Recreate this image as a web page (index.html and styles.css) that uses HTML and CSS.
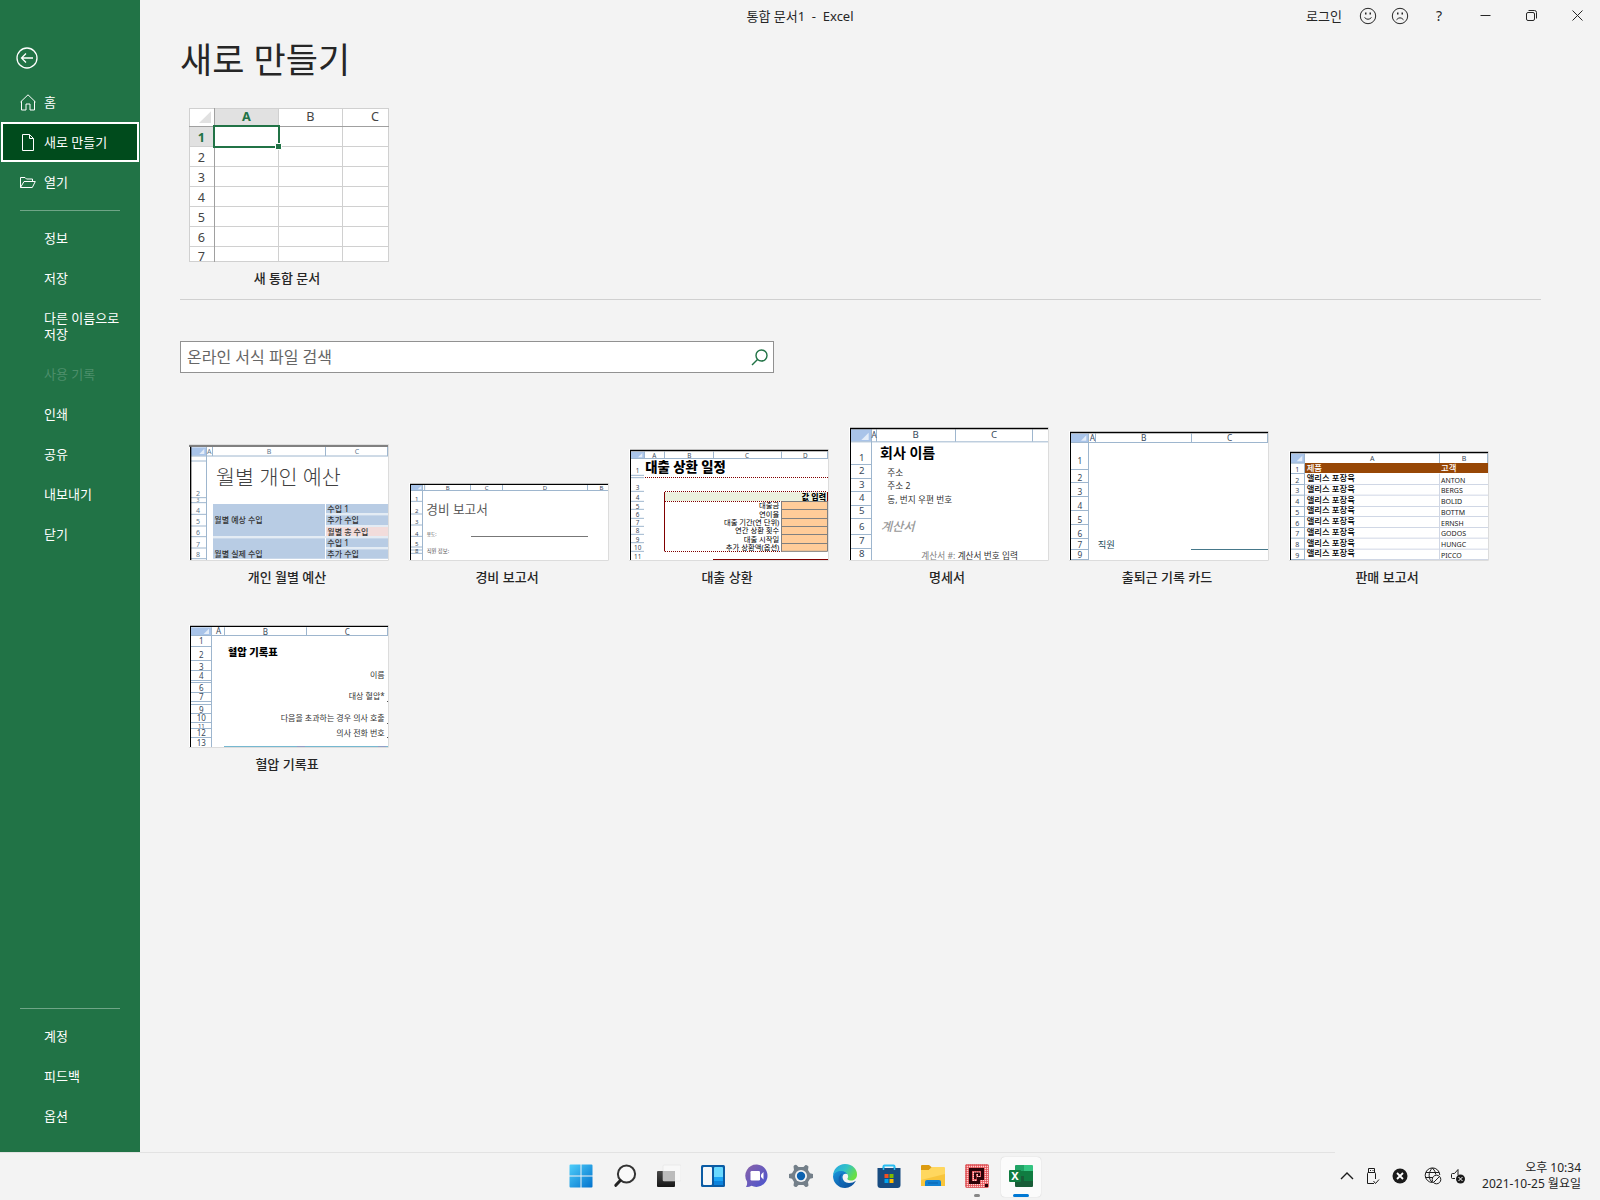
FILE: index.html
```html
<!DOCTYPE html>
<html lang="ko">
<head>
    <meta charset="UTF-8">
    <meta name="viewport" content="width=device-width, initial-scale=1.0">
    <title>통합 문서1 - Excel</title>
    <link rel="stylesheet" href="styles.css">
</head>
<body>
    <div class="window">
        <nav class="sidebar">
            <button class="back" type="button" aria-label="뒤로">
                <svg width="22" height="22" viewBox="0 0 22 22"><circle cx="11" cy="11" r="10"/><path d="M17 11H5.5M10 6.500l-4.500 4.500l4.500 4.500"/></svg>
            </button>
            <ul class="menu">
                <li><a href="#home">
                    <svg width="16" height="17" viewBox="0 0 16 17"><path d="M.5 8L8 .8L15.500 8M1.500 7.200V16H6V10H10V16H14.500V7.200"/></svg>
                    홈</a></li>
                <li><a class="active" href="#new">
                    <svg width="16" height="17" viewBox="0 0 16 17"><path d="M2.500 .5H9.500L13.500 4.500V16.500H2.500ZM9.500 .5V4.500H13.500"/></svg>
                    새로 만들기</a></li>
                <li><a href="#open">
                    <svg width="16" height="13" viewBox="0 0 16 13"><path d="M.5 11.500V1.500H5L6.500 3H12.500V5.500M.5 11.500L4 5.500H15.300L12.300 11.500Z"/></svg>
                    열기</a></li>
            </ul>
            <ul class="menu sub">
                <li><a href="#info">정보</a></li>
                <li><a href="#save">저장</a></li>
                <li><a class="two-line" href="#saveas">다른 이름으로 저장</a></li>
                <li><a class="disabled" href="#history" aria-disabled="true">사용 기록</a></li>
                <li><a href="#print">인쇄</a></li>
                <li><a href="#share">공유</a></li>
                <li><a href="#export">내보내기</a></li>
                <li><a href="#close">닫기</a></li>
            </ul>
            <ul class="menu sub bottom">
                <li><a href="#account">계정</a></li>
                <li><a href="#feedback">피드백</a></li>
                <li><a href="#options">옵션</a></li>
            </ul>
        </nav>
        <div class="content">
            <header class="titlebar">
                <span class="doc-title">통합 문서1&nbsp; -&nbsp; Excel</span>
                <div class="title-tools">
                    <a class="login" href="#login">로그인</a>
                    <button class="face" type="button" aria-label="웃는 얼굴">
                        <svg width="18" height="18" viewBox="0 0 18 18"><circle cx="9" cy="9" r="7.700"/><path d="M5.500 10.500Q9 14 12.500 10.500"/><path class="eye" d="M6 5.500h1.500v2H6zM10.500 5.500h1.500v2h-1.500z"/></svg>
                    </button>
                    <button class="face" type="button" aria-label="슬픈 얼굴">
                        <svg width="18" height="18" viewBox="0 0 18 18"><circle cx="9" cy="9" r="7.700"/><path d="M5.500 12.800Q9 8.800 12.500 12.800"/><path class="eye" d="M6 5.500h1.500v2H6zM10.500 5.500h1.500v2h-1.500z"/></svg>
                    </button>
                    <button class="caption-btn" type="button">?</button>
                    <button class="caption-btn" type="button" aria-label="최소화">
                        <svg width="11" height="11" viewBox="0 0 11 11"><path d="M.5 5.500h10"/></svg>
                    </button>
                    <button class="caption-btn" type="button" aria-label="이전 크기로">
                        <svg width="11" height="11" viewBox="0 0 11 11"><rect x=".5" y="2.500" width="8" height="8" rx="1.500"/><path d="M2.500 .5H8.500Q10.500 .5 10.500 2.500V8.500"/></svg>
                    </button>
                    <button class="caption-btn" type="button" aria-label="닫기">
                        <svg width="11" height="11" viewBox="0 0 11 11"><path d="M.5 .5l10 10M10.500 .5l-10 10"/></svg>
                    </button>
                </div>
            </header>
            <main>
                <h1>새로 만들기</h1>
                <section class="blank">
                    <a class="template" href="#blank">
                        <svg class="thumb" width="200" height="154" viewBox="0 0 600 462">
                            <rect width="600" height="462" fill="#fff"/>
                            <path fill="#e1e1e1" d="M75 0H270V54H75zM0 54H75V117H0zM66 10V45H30z"/>
                            <path class="rule" stroke="#d0d0d0" d="M1.500 0V462M0 1.500H600M0 115.500H600M0 175.500H600M0 235.500H600M0 295.500H600M0 355.500H600M0 415.500H600M0 460.500H600M268.500 0V462M460.500 0V462M598.500 0V462"/>
                            <path class="rule" stroke="#a0a0a0" d="M0 55.500H600M76.500 0V462"/>
                            <path fill="#fff" stroke="#217346" stroke-width="6" d="M75 54H270V117H75z"/>
                            <path fill="#217346" stroke="#fff" stroke-width="3" d="M259.500 106.500H277.500V124.500H259.500z"/>
                            <g font-size="38" fill="#444" text-anchor="middle">
                                <text class="green" x="172" y="38">A</text><text x="364" y="38">B</text><text x="558" y="38">C</text>
                                <text class="green" x="37" y="101">1</text><text x="37" y="162">2</text><text x="37" y="222">3</text><text x="37" y="282">4</text><text x="37" y="342">5</text><text x="37" y="402">6</text><text x="37" y="460">7</text>
                            </g>
                        </svg>
                        <span>새 통합 문서</span>
                    </a>
                </section>
                <form class="search">
                    <input type="search" aria-label="온라인 서식 파일 검색" placeholder="온라인 서식 파일 검색">
                    <button type="button" aria-label="검색 시작">
                        <svg width="17" height="17" viewBox="0 0 17 17"><circle cx="10.500" cy="6.500" r="5.500"/><path d="M6.500 10.500L1 16"/></svg>
                    </button>
                </form>
                <section class="templates">
                    <a class="template" href="#budget">
                        <svg class="thumb" width="200" height="117" viewBox="57 72 600 351">
                            <rect x="57" y="72" width="600" height="351" fill="#fff"/>
                            <path fill="#b8cce4" d="M129 252H465V348H129zM129 355H465V416H129zM468 252H654V279H468zM468 286H654V315H468zM468 355H654V381H468zM468 388H654V416H468z"/>
                            <path fill="#f2dcdb" d="M468 321H654V348H468z"/>
                            <path stroke="#dce6f1" stroke-width="5" d="M129 351H654M468 282H654M468 318H654M468 384H654"/>
                            <path fill="#a9c4e9" d="M63 82H108V107H63z"/><path fill="#e4edf8" d="M103 86V102H88z"/>
                            <path class="rule" stroke="#9eb6ce" d="M63 108H654M109.500 78V420M127.500 80V108M466.500 80V108M652.500 80V108M63 123H109M63 233H109M63 248H109M63 283H109M63 318H109M63 350H109M63 384H109M63 416H109"/>
                            <path fill="#808080" d="M57 74H657V81H57z"/><path d="M60 80H64V420H60z"/>
                            <g font-size="21" fill="#61788c" text-anchor="middle">
                                <text x="118" y="103">A</text><text x="297" y="103">B</text><text x="561" y="103">C</text>
                                <text x="84" y="228">2</text><text x="84" y="246" font-size="15">3</text><text x="84" y="278">4</text><text x="84" y="313">5</text><text x="84" y="346">6</text><text x="84" y="380">7</text><text x="84" y="412">8</text>
                            </g>
                            <text class="light" x="138" y="194" font-size="62" fill="#404040">월별 개인 예산</text>
                            <g font-size="24" font-weight="500" fill="#333">
                                <text x="133" y="310">월별 예상 수입</text><text x="133" y="410">월별 실제 수입</text>
                                <text x="472" y="275">수입 1</text><text x="472" y="310">추가 수입</text><text x="472" y="344">월별 총 수입</text><text x="472" y="377">수입 1</text><text x="472" y="410">추가 수입</text>
                            </g>
                            <path class="frame" d="M58.500 421.500H655.500V73.500"/>
                        </svg>
                        <span>개인 월별 예산</span>
                    </a>
                    <a class="template" href="#expense">
                        <svg class="thumb" width="200" height="78" viewBox="717 189 600 234">
                            <rect x="717" y="189" width="600" height="234" fill="#fff"/>
                            <path fill="#a9c4e9" d="M723 195H757V210H723z"/><path fill="#e4edf8" d="M754 197V208H743z"/>
                            <path class="rule" stroke="#9eb6ce" d="M723 211.500H1314M757.500 195V420M764 195V211M901.500 195V211M997.500 195V211M1252.500 195V211M723 244H757M723 282H757M723 315H757M723 349H757M723 381H757M723 390H757M723 400H757"/>
                            <path d="M720 191H1314V195H723V420H720z"/>
                            <g font-size="18" fill="#39495a" text-anchor="middle">
                                <text x="833" y="209">B</text><text x="950" y="209">C</text><text x="1125" y="209">D</text><text x="1294" y="209">B</text>
                                <text x="740" y="243">1</text><text x="740" y="278">2</text><text x="740" y="313">3</text><text x="740" y="347">4</text><text x="740" y="379">5</text><text x="740" y="398">8</text>
                            </g>
                            <text class="title" x="769" y="283" font-size="38" fill="#595959">경비 보고서</text>
                            <text x="770" y="347" font-size="14" fill="#555">용도:</text><text x="770" y="400" font-size="16" fill="#555">직원 정보:</text>
                            <path class="rule" stroke="#777" d="M903 349.500H1254"/>
                            <path class="frame" d="M717 421.500H1315.500V189"/>
                        </svg>
                        <span>경비 보고서</span>
                    </a>
                    <a class="template" href="#loan">
                        <svg class="thumb" width="200" height="112" viewBox="57 87 600 336">
                            <rect x="57" y="87" width="600" height="336" fill="#fff"/>
                            <path fill="#a9c4e9" d="M63 95H102V115H63z"/><path fill="#e4edf8" d="M97 99V112H84z"/>
                            <path class="rule" stroke="#9eb6ce" d="M63 115.500H654M103.500 95V117M163.500 95V115M310.500 95V115M514.500 95V115M652.500 95V115M63 166H102M63 173H102M63 214H102M63 244H102M63 268H102M63 295H102M63 319H102M63 343H102M63 368H102M63 394H102"/>
                            <path d="M60 89H654V94H63V420H60z"/>
                            <path fill="#ebf1de" d="M165 217H651V243H165z"/>
                            <path fill="#ffcc99" stroke="#808080" stroke-width="3" d="M514.500 244.500H652.500V394H514.500z"/>
                            <path class="rule" stroke="#808080" d="M514 268.500H652M514 295.500H652M514 319.500H652M514 343.500H652M514 370.500H652"/>
                            <path class="rule" stroke="#800000" stroke-dasharray="3" d="M105 172.500H654M165 214.500H651M165 244.500H514M165 394.500H514"/>
                            <path class="rule" stroke="#800000" d="M163.500 216V394M652.500 216V244M309 418.500H654"/>
                            <g font-size="19" fill="#39495a" text-anchor="middle">
                                <text x="133" y="113">A</text><text x="238" y="113">B</text><text x="411" y="113">C</text><text x="586" y="113">D</text>
                                <text x="83" y="159">1</text><text x="83" y="210">3</text><text x="83" y="240">4</text><text x="83" y="266">5</text><text x="83" y="291">6</text><text x="83" y="315">7</text><text x="83" y="340">8</text><text x="83" y="365">9</text><text x="83" y="390">10</text><text x="83" y="417">11</text>
                            </g>
                            <text x="106" y="157" font-size="40" font-weight="900">대출 상환 일정</text>
                            <g font-size="22" text-anchor="end">
                                <text x="648" y="239" font-size="24" font-weight="900">값 입력</text><text x="508" y="265">대출금</text><text x="508" y="290">연이율</text><text x="508" y="315">대출 기간(연 단위)</text><text x="508" y="340">연간 상환 횟수</text><text x="508" y="365">대출 시작일</text><text x="508" y="390">추가 상환액(옵션)</text>
                            </g>
                            <path class="frame" d="M57 421.500H655.500V87"/>
                        </svg>
                        <span>대출 상환</span>
                    </a>
                    <a class="template" href="#invoice">
                        <svg class="thumb" width="200" height="134" viewBox="717 21 600 402">
                            <rect x="717" y="21" width="600" height="402" fill="#fff"/>
                            <path fill="#a9c4e9" d="M723 28H784V64H723z"/><path fill="#e4edf8" d="M776 38V60H754z"/>
                            <path class="rule" stroke="#9eb6ce" d="M723 65.500H1314M784.500 28V420M799.500 28V65M1036.500 28V65M1267.500 28V65M723 133.500H784M723 175.500H784M723 214.500H784M723 256.500H784M723 295.500H784M723 343.500H784M723 385.500H784"/>
                            <path d="M720 23H1314V28H723V420H720z"/>
                            <g font-size="29" fill="#39495a" text-anchor="middle">
                                <text x="792" y="54" font-size="24">A</text><text x="917" y="54">B</text><text x="1152" y="54">C</text>
                                <text x="755" y="122">1</text><text x="755" y="162">2</text><text x="755" y="203">3</text><text x="755" y="244">4</text><text x="755" y="282">5</text><text x="755" y="330">6</text><text x="755" y="371">7</text><text x="755" y="412">8</text>
                            </g>
                            <text x="810" y="113" font-size="42" font-weight="700">회사 이름</text>
                            <g font-size="26" fill="#333"><text x="832" y="168">주소</text><text x="832" y="207">주소 2</text><text x="832" y="248">동, 번지 우편 번호</text></g>
                            <text x="812" y="332" font-size="37" font-style="italic" font-weight="500" fill="#999">계산서</text>
                            <text x="934" y="416" font-size="26" fill="#333"><tspan fill="#808080">계산서 #:</tspan> 계산서 번호 입력</text>
                            <path class="frame" d="M717 421.500H1315.500V21"/>
                        </svg>
                        <span>명세서</span>
                    </a>
                    <a class="template" href="#timecard">
                        <svg class="thumb" width="200" height="130" viewBox="57 33 600 390">
                            <rect x="57" y="33" width="600" height="390" fill="#fff"/>
                            <path fill="#a9c4e9" d="M63 41H115V67H63z"/><path fill="#e4edf8" d="M109 46V62H93z"/>
                            <path class="rule" stroke="#9eb6ce" d="M63 67.500H654M115.500 41V420M136.500 41V67M424.500 41V67M652.500 41V67M63 148.500H115M63 187.500H115M63 229.500H115M63 271.500H115M63 313.500H115M63 355.500H115M63 388.500H115M63 418.500H115"/>
                            <path d="M60 35H654V40H63V420H60z"/>
                            <g font-size="25" fill="#39495a" text-anchor="middle">
                                <text x="127" y="63">A</text><text x="281" y="63">B</text><text x="539" y="63">C</text>
                                <text x="90" y="133">1</text><text x="90" y="183">2</text><text x="90" y="224">3</text><text x="90" y="266">4</text><text x="90" y="309">5</text><text x="90" y="351">6</text><text x="90" y="383">7</text><text x="90" y="413">9</text>
                            </g>
                            <text x="143" y="383" font-size="28" fill="#244a5a">직원</text>
                            <path class="rule" stroke="#46788a" d="M423 388.500H654"/>
                            <path class="frame" d="M57 421.500H655.500V33"/>
                        </svg>
                        <span>출퇴근 기록 카드</span>
                    </a>
                    <a class="template" href="#sales">
                        <svg class="thumb" width="200" height="110" viewBox="717 93 600 330">
                            <rect x="717" y="93" width="600" height="330" fill="#fff"/>
                            <path fill="#a9c4e9" d="M723 101H762V129H723z"/><path fill="#e4edf8" d="M757 107V124H740z"/>
                            <path class="rule" stroke="#d0d7e5" d="M765 193.500H1314M765 225.500H1314M765 259.500H1314M765 289.500H1314M765 322.500H1314M765 354.500H1314M765 387.500H1314M765 418.500H1314M1168.500 161V420"/>
                            <path class="rule" stroke="#9eb6ce" d="M763.500 101V420M1168.500 101V130M1312.500 101V130M723 129.500H765M723 160.500H763M723 193.500H763M723 225.500H763M723 259.500H763M723 289.500H763M723 322.500H763M723 354.500H763M723 387.500H763M723 418.500H763"/>
                            <path fill="#974706" d="M765 129H1314V159H765z"/>
                            <path d="M720 95H1314V100H723V420H720z"/>
                            <g font-size="21" fill="#39495a" text-anchor="middle">
                                <text x="967" y="123">A</text><text x="1242" y="123">B</text>
                                <text x="742" y="156">1</text><text x="742" y="189">2</text><text x="742" y="219">3</text><text x="742" y="252">4</text><text x="742" y="285">5</text><text x="742" y="318">6</text><text x="742" y="348">7</text><text x="742" y="381">8</text><text x="742" y="414">9</text>
                            </g>
                            <g font-size="25" font-weight="500">
                                <text x="770" y="152" fill="#fff">제품</text><text x="1173" y="152" fill="#fff">고객</text>
                                <text x="770" y="184">앨리스 포장육</text><text x="770" y="217">앨리스 포장육</text><text x="770" y="250">앨리스 포장육</text><text x="770" y="280">앨리스 포장육</text><text x="770" y="313">앨리스 포장육</text><text x="770" y="346">앨리스 포장육</text><text x="770" y="379">앨리스 포장육</text><text x="770" y="409">앨리스 포장육</text>
                            </g>
                            <g font-size="21" fill="#222">
                                <text x="1173" y="189">ANTON</text><text x="1173" y="219">BERGS</text><text x="1173" y="252">BOLID</text><text x="1173" y="285">BOTTM</text><text x="1173" y="318">ERNSH</text><text x="1173" y="348">GODOS</text><text x="1173" y="381">HUNGC</text><text x="1173" y="414">PICCO</text>
                            </g>
                            <path class="frame" d="M717 421.500H1315.500V93"/>
                        </svg>
                        <span>판매 보고서</span>
                    </a>
                    <a class="template" href="#pressure">
                        <svg class="thumb" width="200" height="123" viewBox="57 45 600 369">
                            <rect x="57" y="45" width="600" height="369" fill="#fff"/>
                            <path fill="#a9c4e9" d="M63 52H124V76H63z"/><path fill="#e4edf8" d="M117 56V72H101z"/>
                            <path class="rule" stroke="#9eb6ce" d="M63 76.500H654M124.500 52V411M163.500 52V76M409.500 52V76M652.500 52V76M63 109.500H124M63 151.500H124M63 181.500H124M63 211.500H124M63 217.500H124M63 247.500H124M63 274.500H124M63 283.500H124M63 310.500H124M63 337.500H124M63 355.500H124M63 382.500H124"/>
                            <path d="M60 47H654V51H63V411H60z"/>
                            <g font-size="24" fill="#39495a" text-anchor="middle">
                                <text x="146" y="73">A</text><text x="286" y="74">B</text><text x="532" y="74">C</text>
                                <text x="94" y="103">1</text><text x="94" y="143">2</text><text x="94" y="179">3</text><text x="94" y="206">4</text><text x="94" y="243">6</text><text x="94" y="271">7</text><text x="94" y="308">9</text><text x="94" y="334">10</text><text x="94" y="353" font-size="18">11</text><text x="94" y="379">12</text><text x="94" y="407">13</text>
                            </g>
                            <text x="173" y="138" font-size="31" font-weight="900">혈압 기록표</text>
                            <g font-size="24" fill="#333" text-anchor="end">
                                <text x="644" y="204">이름</text><text x="644" y="267">대상 혈압*</text><text x="644" y="333">다음을 초과하는 경우 의사 호출</text><text x="644" y="377">의사 전화 번호</text>
                            </g>
                            <path class="rule" stroke="#76b8d0" d="M162 409.500H654"/><path class="rule" stroke="#8f9fc8" d="M381 409.500H405M624 409.500H648"/>
                            <path d="M651 273h3v3h-3zM651 339h3v3h-3zM651 381h3v3h-3z" fill="#555"/>
                            <path class="frame" d="M57 412.500H655.500V45"/>
                        </svg>
                        <span>혈압 기록표</span>
                    </a>
                </section>
            </main>
        </div>
    </div>
    <footer class="taskbar">
        <div class="apps">
            <button type="button" aria-label="시작">
                <svg width="24" height="24" viewBox="0 0 24 24">
                    <defs><linearGradient id="win" x1="0" y1="0" x2="24" y2="24" gradientUnits="userSpaceOnUse"><stop stop-color="#50d0fb"/><stop offset="1" stop-color="#0070cc"/></linearGradient></defs>
                    <path fill="url(#win)" d="M1.500 .5H11.500V11.500H.5V1.500Q.5 .5 1.500 .5zM12.500 .5H22.500Q23.500 .5 23.500 1.500V11.500H12.500zM.5 12.500H11.500V23.500H1.500Q.5 23.500 .5 22.500zM12.500 12.500H23.500V22.500Q23.500 23.500 22.500 23.500H12.500z"/>
                </svg>
            </button>
            <button type="button" aria-label="검색">
                <svg width="24" height="24" viewBox="0 0 24 24"><circle cx="13.500" cy="10" r="8.600" fill="#f9f9f9" stroke="#333" stroke-width="2"/><path stroke="#222" stroke-width="3" stroke-linecap="round" d="M7.300 16.500L2.800 21.300"/></svg>
            </button>
            <button type="button" aria-label="작업 보기">
                <svg width="24" height="24" viewBox="0 0 24 24">
                    <defs><linearGradient id="dark" x1="0" y1="0" x2="0" y2="1"><stop stop-color="#484848"/><stop offset="1" stop-color="#161616"/></linearGradient></defs>
                    <rect y="7" width="18" height="16" rx="1" fill="url(#dark)"/><rect x="6" y="1" width="18" height="16" rx="1" fill="#f8f8f8" stroke="#ddd" stroke-width=".5"/><path fill="#bcbcbc" d="M6 7H18V17H6z"/>
                </svg>
            </button>
            <button type="button" aria-label="위젯">
                <svg width="24" height="24" viewBox="0 0 24 24"><rect y="1" width="24" height="22" rx="1.500" fill="#0a5ba4"/><rect x="2" y="3" width="9" height="18" rx="1" fill="#f5f7f9"/><path fill="#69d9ff" d="M14 3H21Q22 3 22 4V13H13V4Q13 3 14 3z"/><path fill="#1aa4f5" d="M13 13H22V17H13z"/><path fill="#0c82dc" d="M13 17H22V21H13z"/></svg>
            </button>
            <button type="button" aria-label="채팅">
                <svg width="24" height="24" viewBox="0 0 24 24">
                    <defs><linearGradient id="chat" x1="0" y1="0" x2="1" y2="1"><stop stop-color="#8a62a8"/><stop offset="1" stop-color="#4854d0"/></linearGradient></defs>
                    <path fill="url(#chat)" d="M12 .5A11.200 11.200 0 1 1 6.500 21.800Q3.500 23.500 1 23Q2.500 21 2 17.500A11.200 11.200 0 0 1 12 .5z"/><rect x="5.500" y="7" width="9.500" height="9.500" rx="1.200" fill="#fff"/><path fill="#fff" d="M16 10.500L18.500 8V15.500L16 13z"/>
                </svg>
            </button>
            <button type="button" aria-label="설정">
                <svg width="24" height="24" viewBox="0 0 24 24"><path fill="#737f89" d="M5 1.500Q6.500 .5 7.500 1L9.500 3H14.500L16.500 1Q18 .5 19.500 2.500L19 6L21 9.300L24 10V14L21 14.700L19 18L19.500 21.500Q18 23.500 16.500 23L14.500 21H9.500L7.500 23Q6 23.500 4.500 21.500L5 18L3 14.700L0 14V10L3 9.300L5 6L4.500 2.500z"/><circle cx="12" cy="12" r="6" fill="#f3f3f3"/><circle cx="12" cy="12" r="4.200" fill="#0c62b0"/></svg>
            </button>
            <button type="button" aria-label="Edge">
                <svg width="24" height="24" viewBox="0 0 24 24">
                    <defs><linearGradient id="edge" x1="0" y1="0" x2="1" y2=".5"><stop stop-color="#25a4e6"/><stop offset=".55" stop-color="#33c3c5"/><stop offset="1" stop-color="#68df45"/></linearGradient><linearGradient id="edge2" x1="0" y1="0" x2=".8" y2="1"><stop stop-color="#1898e0"/><stop offset="1" stop-color="#0b4c98"/></linearGradient></defs>
                    <path fill="url(#edge2)" d="M0 12Q1 6 7 6Q12 6 14.500 10Q10 8.500 9.500 13Q9.500 18.500 16 19Q20 19 23 16.800Q19 24 12 24A12 12 0 0 1 0 12z"/>
                    <path fill="url(#edge)" d="M0 12A12 12 0 0 1 12 0C20 0 24 5.500 24 10.500C24 15 20.500 16.800 17.500 16.500C15 16.300 14 15.300 14.500 14.300C16.500 12.500 14 7.200 8.500 7C4 7 1 9 0 12z"/>
                    <path fill="#1162b2" d="M8 12Q6.500 20 13.500 23.800Q8 22.500 6 18Q4.500 12 9.500 9Z"/>
                </svg>
            </button>
            <button type="button" aria-label="Microsoft Store">
                <svg width="24" height="24" viewBox="0 0 24 24"><path fill="none" stroke="#28bdf2" stroke-width="2" d="M6.500 7V2.500Q6.500 1.500 7.500 1.500H16.500Q17.500 1.500 17.500 2.500V7"/><path fill="#174b80" d="M.5 4H23.500V21Q23.500 24 20.500 24H3.500Q.5 24 .5 21z"/><path fill="none" stroke="#28bdf2" stroke-width="1.500" d="M6.500 6V3M17.500 6V3"/><path fill="#f25022" d="M7.500 10H11.500V14H7.500z"/><path fill="#7fba00" d="M12.500 10H16.500V14H12.500z"/><path fill="#00a4ef" d="M7.500 15H11.500V19H7.500z"/><path fill="#ffb900" d="M12.500 15H16.500V19H12.500z"/></svg>
            </button>
            <button type="button" aria-label="파일 탐색기">
                <svg width="24" height="24" viewBox="0 0 24 24"><path fill="#dc9b10" d="M0 2Q0 1 1 1H8L11 3.500L8 6H0z"/><path fill="#ffd75e" d="M0 6H8L11 3H23Q24 3 24 4V22H0z"/><path fill="#f8c53c" d="M0 16L24 10V22H0z"/><path fill="#1180d2" d="M4 22V18Q4 16 6 16H18Q20 16 20 18V22z"/><path fill="#0b61ac" d="M7 18.500H17V19.500H7z"/></svg>
            </button>
            <button class="running" type="button" aria-label="캡처 도구">
                <svg width="24" height="24" viewBox="0 0 24 24">
                    <defs><pattern id="dots" width="2" height="2" patternUnits="userSpaceOnUse"><rect width="2" height="2" fill="#e0474c"/><rect width="1.300" height="1.300" fill="#ffd0d0"/></pattern></defs>
                    <rect x=".5" y=".5" width="23" height="23" rx="1" fill="url(#dots)" stroke="#d5393e" stroke-width=".6"/><path fill="#2b0308" fill-rule="evenodd" d="M4 4H19V16H15V20H4zM7 7V17H12V13H16V7z"/><path fill="#2b0308" fill-rule="evenodd" d="M9 8.500H15V12H11.500V15H9zM11 10V12H13V10z"/><path fill="#2b0308" d="M20 20h3v3h-3z"/>
                </svg>
            </button>
            <button class="running current" type="button" aria-label="Excel">
                <svg width="24" height="24" viewBox="0 0 24 24"><path fill="#21a366" d="M6 2Q6 1 7 1H15V12H6z"/><path fill="#33c481" d="M15 1H23Q24 1 24 2V7H15z"/><path fill="#107c41" d="M15 7H24V12H15zM6 7H15V12H6z"/><path fill="#185c37" d="M6 12H15V17H24V22Q24 23 23 23H7Q6 23 6 22z"/><path fill="#107c41" d="M15 12H24V17H15z"/><rect y="6" width="12" height="12" rx="1" fill="#107c41"/><text x="6" y="16" font-size="11" font-weight="700" fill="#fff" text-anchor="middle">X</text></svg>
            </button>
        </div>
        <div class="tray">
            <button type="button" aria-label="숨겨진 아이콘 표시"><svg width="14" height="16" viewBox="0 0 14 16"><path d="M1 11L7 5L13 11" stroke-width="1.400"/></svg></button>
            <button type="button" aria-label="USB"><svg width="14" height="18" viewBox="0 0 14 18"><path d="M2.500 6V1.500H8.500V6M1.500 16.500V6.500Q1.500 5.500 2.500 5.500H8.500Q9.500 5.500 9.500 6.500V12M1.500 16.500H8M4 3.500h1M6.500 3.500h1M7.500 14L9.500 16.500L13 12.500"/></svg></button>
            <button type="button" aria-label="오류"><svg width="16" height="16" viewBox="0 0 16 16"><circle cx="8" cy="8" r="7.500" fill="#1b1b1b" stroke="none"/><path stroke="#fff" stroke-width="1.800" d="M5 5l6 6M11 5l-6 6"/></svg></button>
            <div class="network">
                <button type="button" aria-label="네트워크"><svg width="18" height="18" viewBox="0 0 18 18"><path d="M8.500 15.500A7.300 7.300 0 1 1 15.800 8M8.500 1C4 5 4 12 8.500 15.500M8.500 1Q11.500 4 11.800 7.500M2 5.500H15M1.500 10.500H9"/><circle cx="12.500" cy="12.500" r="4.300"/><path d="M9.500 15.500l6-6"/></svg></button>
                <button type="button" aria-label="음소거"><svg width="16" height="18" viewBox="0 0 16 18"><path d="M5 11.500H2.500Q1.500 11.500 1.500 10.500V7.500Q1.500 6.500 2.500 6.500H4.500L8 2.500V8"/><circle cx="10.500" cy="12" r="4.500" fill="#1b1b1b" stroke="none"/><path stroke="#fff" d="M8.500 10l4 4M12.500 10l-4 4"/></svg></button>
            </div>
            <time datetime="2021-10-25T22:34">오후 10:34<br>2021-10-25 월요일</time>
        </div>
    </footer>
</body>
</html>
```
FILE: styles.css
```css
* {
  box-sizing: border-box;
}
body {
  display: flex;
  flex-direction: column;
  min-height: 100vh;
  margin: 0;
  background: #f3f3f3;
  color: #262626;
  font-family: "Noto Sans", "Noto Sans CJK KR", sans-serif;
  font-size: 13px;
  line-height: 16px;
}
a {
  color: inherit;
  text-decoration: none;
}
button {
  padding: 0;
  border: 0;
  background: none;
  color: inherit;
  font: inherit;
}
svg {
  display: block;
  flex: none;
}
.window {
  display: flex;
  flex: 1;
}

/* sidebar */
.sidebar {
  display: flex;
  flex-direction: column;
  flex: none;
  width: 140px;
  padding: 47px 0 16px;
  background: #217346;
  color: #fff;
}
.sidebar svg {
  fill: none;
  stroke: #fff;
}
.back {
  align-self: flex-start;
  margin: 0 0 13px 16px;
}
.back svg {
  stroke-width: 1.3px;
}
.menu {
  margin: 0;
  padding: 0;
  list-style: none;
}
.menu a {
  display: flex;
  align-items: center;
  gap: 8px;
  height: 40px;
  padding: 0 18px 0 20px;
}
.menu a.active {
  margin: 0 1px;
  padding-left: 19px;
  outline: 2px solid #fff;
  outline-offset: -2px;
  background: #004b1c;
}
.menu.sub::before {
  display: block;
  height: 1px;
  margin: 8px 20px 7px;
  background: #6fa587;
  content: '';
}
.menu.sub a {
  padding-left: 44px;
}
.menu.sub a.two-line {
  height: 56px;
  padding-right: 16px;
}
.menu a.disabled {
  color: #4d8f6b;
}
.menu.bottom {
  margin-top: auto;
}

/* title bar */
.content {
  flex: 1;
  min-width: 0;
}
.titlebar {
  display: flex;
  position: relative;
  justify-content: flex-end;
  height: 31px;
}
.doc-title {
  position: absolute;
  top: 8px;
  right: 0;
  left: -140px;
  text-align: center;
}
.title-tools {
  display: flex;
  position: relative;
  align-items: center;
}
.title-tools svg {
  margin: 0 auto;
  fill: none;
  stroke: #262626;
}
.title-tools .eye {
  fill: #262626;
  stroke: none;
}
.login {
  margin-right: 10px;
}
.face {
  width: 32px;
}
.caption-btn {
  width: 46px;
  height: 30px;
  font-size: 14px;
}

/* page */
main {
  padding: 0 59px 0 40px;
}
h1 {
  margin: 5px 0 0;
  font-size: 35px;
  font-weight: 400;
  line-height: 48px;
}
.blank {
  padding: 24px 0 13px 9px;
  border-bottom: 1px solid #d0d0d0;
}
.template {
  display: block;
  width: 200px;
  font-weight: 500;
  text-align: center;
}
.template span {
  display: block;
  margin-top: 8px;
  padding-right: 4px;
}
.thumb {
  font-family: "Noto Sans", "Noto Sans CJK KR", sans-serif;
  font-weight: 400;
}
.thumb .rule {
  fill: none;
  stroke-width: 3px;
}
.thumb .frame {
  fill: none;
  stroke: #dcdcdc;
  stroke-width: 3px;
}
.thumb .green {
  fill: #217346;
  font-weight: 700;
}
.thumb .light {
  font-weight: 300;
}
.search {
  display: flex;
  align-items: center;
  max-width: 594px;
  height: 32px;
  margin-top: 41px;
  padding: 0 5px 0 6px;
  border: 1px solid #919191;
  background: #fff;
}
.search input {
  flex: 1;
  min-width: 0;
  padding: 0;
  border: 0;
  outline: 0;
  background: none;
  color: #262626;
  font: inherit;
  font-size: 16px;
  line-height: 24px;
}
.search input::placeholder {
  color: #666;
  opacity: 1;
}
.search svg {
  fill: none;
  stroke: #217346;
  stroke-width: 1.4px;
}
.templates {
  display: grid;
  grid-template-columns: repeat(auto-fill, 200px);
  align-items: end;
  gap: 40px 20px;
  padding: 54px 0 40px 9px;
}

/* taskbar */
.taskbar {
  display: flex;
  position: relative;
  align-items: center;
  justify-content: center;
  height: 48px;
  padding-left: 2px;
  border-top: 1px solid #e2e2e2;
}
.apps {
  display: flex;
  gap: 4px;
}
.apps button {
  position: relative;
  width: 40px;
  height: 40px;
  padding-bottom: 2px;
  border-radius: 4px;
}
.apps svg {
  margin: 0 auto;
}
.apps .current {
  background: #fbfbfb;
  box-shadow: 0 0 1px #bbb;
}
.running::after {
  position: absolute;
  bottom: 0;
  left: 50%;
  width: 6px;
  height: 3px;
  margin-left: -3px;
  border-radius: 2px;
  background: #868686;
  content: '';
}
.running.current::after {
  width: 16px;
  margin-left: -8px;
  background: #0078d4;
}
.tray {
  display: flex;
  position: absolute;
  top: -1px;
  right: 0;
  align-items: center;
  gap: 12px;
  height: 48px;
  padding: 0 19px 0 5px;
  background: #f3f3f3;
}
.tray svg {
  fill: none;
  stroke: #1b1b1b;
}
.network {
  display: flex;
  gap: 8px;
  margin: 0 4px;
}
.tray time {
  font-size: 12px;
  text-align: right;
}
```
